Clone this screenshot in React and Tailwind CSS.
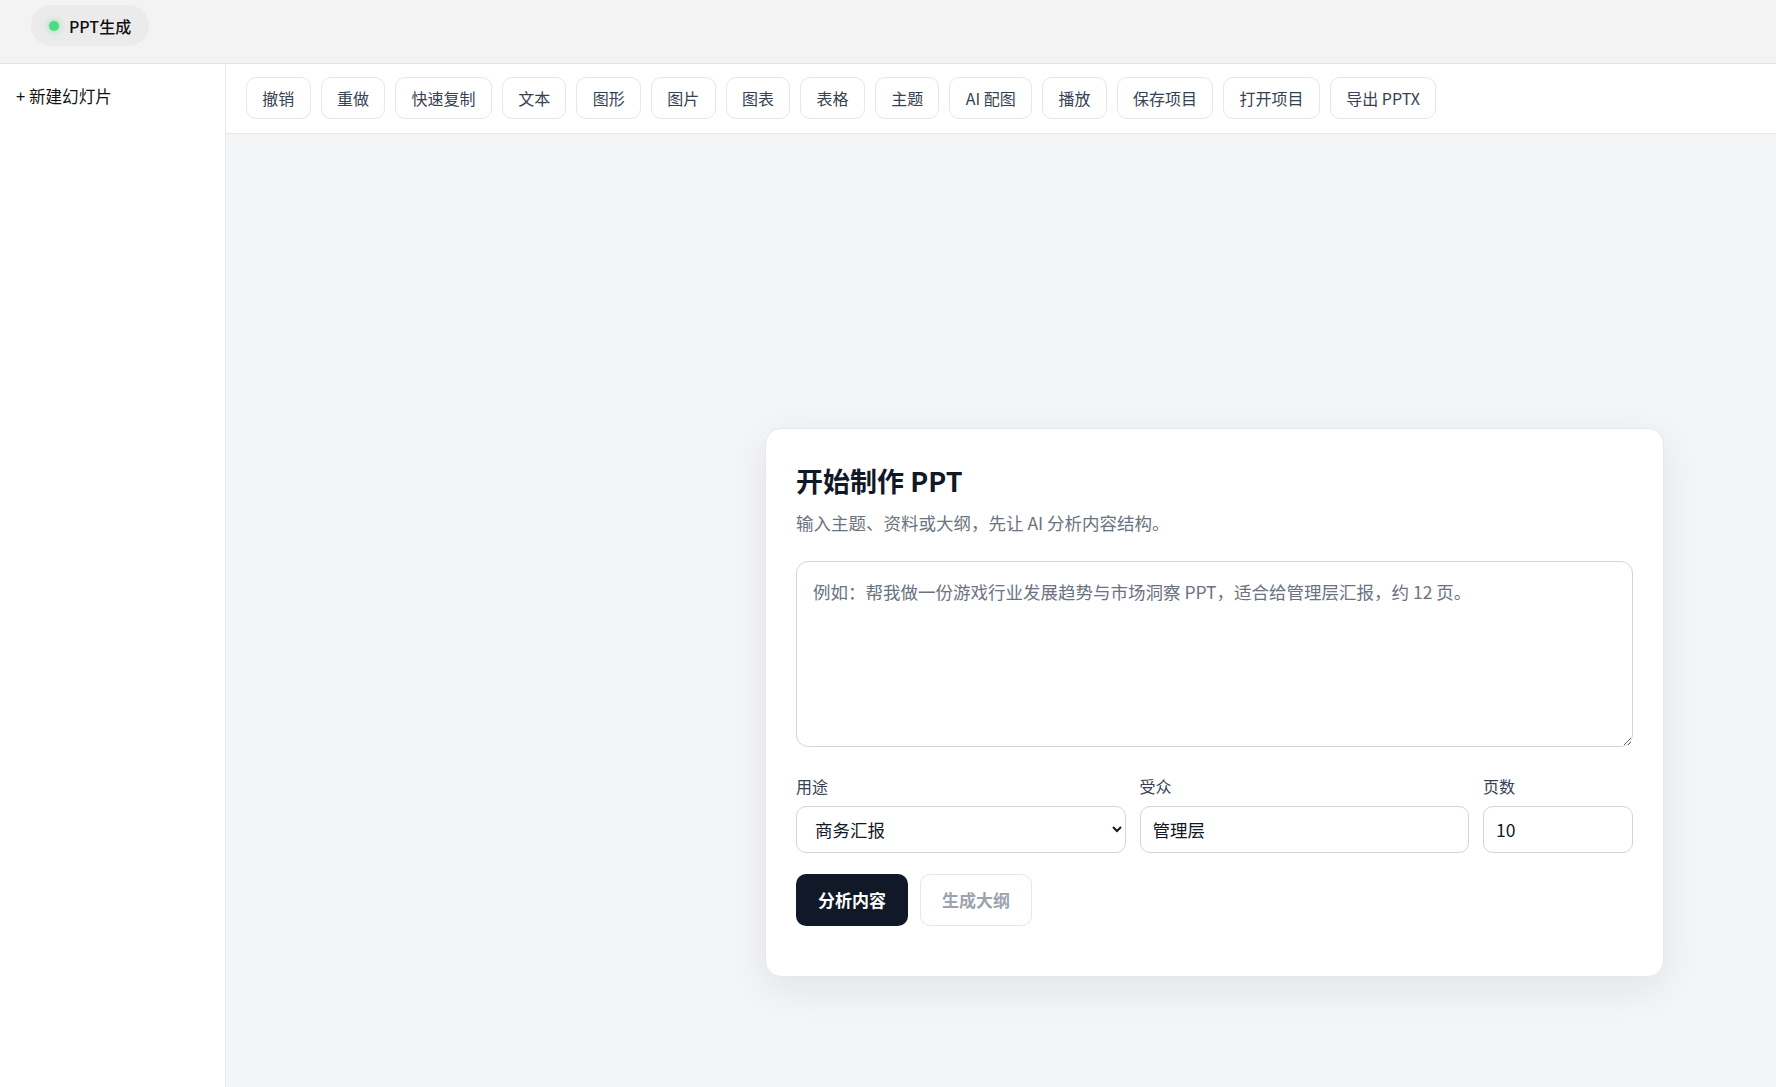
import React, { useState } from "react";

const tools = ["撤销", "重做", "快速复制", "文本", "图形", "图片", "图表", "表格", "主题", "AI 配图", "播放", "保存项目", "打开项目", "导出 PPTX"];

export default function App() {
  const [prompt, setPrompt] = useState("");
  const [purpose, setPurpose] = useState("商务汇报");
  const [audience, setAudience] = useState("管理层");
  const [pages, setPages] = useState("10");

  return (
    <div className="h-screen flex flex-col overflow-hidden bg-[#f4f5f7] text-[#111827] font-['Noto_Sans_CJK_SC',sans-serif]">
      <header className="h-[64px] shrink-0 bg-[#f3f3f3] border-b border-[#e3e3e3] pl-[31px] pt-[5px]">
        <div className="inline-flex items-center gap-[10px] h-[41px] pl-[18px] pr-[18px] rounded-full bg-[#ebebeb]">
          <span className="w-[10px] h-[10px] rounded-full bg-[#4ade80] shadow-[0_0_6px_rgba(74,222,128,0.7)]" />
          <span className="text-base font-medium text-[#111]">PPT生成</span>
        </div>
      </header>

      <div className="flex flex-1 min-h-0">
        <aside className="w-[226px] shrink-0 bg-white border-r border-[#e5e7eb] px-4 pt-[20px]">
          <button className="text-[16.6px] text-[#111] leading-6">+ 新建幻灯片</button>
        </aside>

        <div className="flex-1 flex flex-col min-w-0">
          <div className="h-[70px] shrink-0 bg-white border-b border-[#e5e7eb] flex items-start pt-[13px] px-5 gap-[10px]">
            {tools.map((t) => (
              <button key={t} className="h-[42px] px-[15.3px] rounded-[10px] border border-[#e5e7eb] bg-white text-base text-[#374151] whitespace-nowrap">
                {t}
              </button>
            ))}
          </div>

          <main className="flex-1 pl-[539px] pt-[294px]">
            <div className="w-[899px] bg-white border border-[#e5e7eb] rounded-2xl shadow-[0_12px_40px_rgba(15,23,42,0.08)] px-[30px] pt-[34px] pb-[50px]">
              <h1 className="text-[27px] leading-[36px] font-bold text-[#111827]">开始制作 PPT</h1>
              <p className="mt-[11px] text-[17.5px] leading-[26px] text-[#6b7280]">输入主题、资料或大纲，先让 AI 分析内容结构。</p>

              <textarea
                value={prompt}
                onChange={(e) => setPrompt(e.target.value)}
                placeholder="例如：帮我做一份游戏行业发展趋势与市场洞察 PPT，适合给管理层汇报，约 12 页。"
                className="mt-[25px] block w-full h-[186px] rounded-xl border border-[#d1d5db] px-4 py-4 text-[17.5px] leading-[27px] placeholder:text-[#6b7280] outline-none"
              />

              <div className="mt-[27px] grid grid-cols-[1fr_1fr_150px] gap-[14px]">
                <label className="block">
                  <span className="block text-base leading-6 text-[#374151]">用途</span>
                  <select
                    value={purpose}
                    onChange={(e) => setPurpose(e.target.value)}
                    className="mt-[8px] block w-full h-[47px] rounded-[10px] border border-[#d1d5db] bg-white pl-[14px] pr-[14px] text-[17.5px] text-[#111827] outline-none"
                  >
                    <option>商务汇报</option>
                    <option>教学培训</option>
                    <option>产品发布</option>
                  </select>
                </label>
                <label className="block">
                  <span className="block text-base leading-6 text-[#374151]">受众</span>
                  <input
                    value={audience}
                    onChange={(e) => setAudience(e.target.value)}
                    className="mt-[8px] block w-full h-[47px] rounded-[10px] border border-[#d1d5db] px-3 text-[17.5px] text-[#111827] outline-none"
                  />
                </label>
                <label className="block">
                  <span className="block text-base leading-6 text-[#374151]">页数</span>
                  <input
                    value={pages}
                    onChange={(e) => setPages(e.target.value)}
                    className="mt-[8px] block w-full h-[47px] rounded-[10px] border border-[#d1d5db] px-3 text-[17.5px] text-[#111827] outline-none"
                  />
                </label>
              </div>

              <div className="mt-[21px] flex gap-[12px]">
                <button className="h-[52px] px-[22px] rounded-[10px] bg-[#111827] text-white text-[17px] font-bold">分析内容</button>
                <button disabled className="h-[52px] px-[21px] rounded-[10px] border border-[#e5e7eb] bg-white text-[#9ca3af] text-[17px] font-semibold">生成大纲</button>
              </div>
            </div>
          </main>
        </div>
      </div>
    </div>
  );
}
